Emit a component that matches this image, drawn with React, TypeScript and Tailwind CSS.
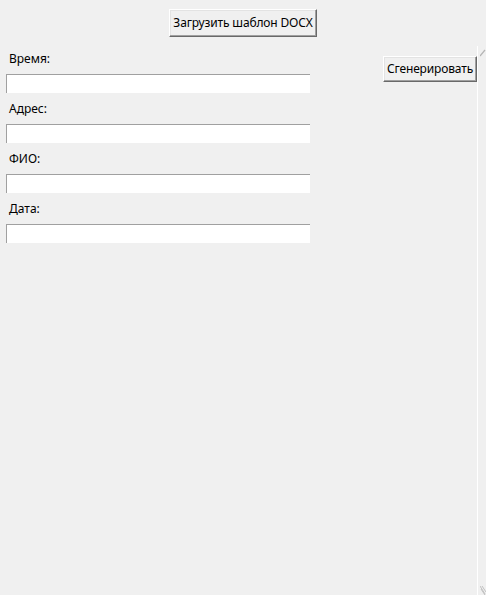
const fields = ["Время:", "Адрес:", "ФИО:", "Дата:"];

const btn =
  "h-full w-full px-0 whitespace-nowrap bg-[#f0f0f0] text-[12px] leading-none text-black border border-t-white border-l-white border-b-[#696969] border-r-[#696969] shadow-[inset_-1px_-1px_0_#a0a0a0,inset_1px_1px_0_#e3e3e3]";

export default function App() {
  return (
    <div
      className="relative w-[486px] h-[595px] bg-[#f0f0f0] overflow-hidden flex flex-col"
      style={{ fontFamily: '"Noto Sans", "Segoe UI", sans-serif' }}
    >
      <div className="h-[46px] flex justify-center pt-[9px]">
        <div className="h-[28px] w-[148px]">
          <button className={btn + " tracking-[-0.15px]"}>Загрузить шаблон DOCX</button>
        </div>
      </div>

      <div className="flex flex-1">
        <div className="w-[310px] pl-[6px] pt-[5px] flex flex-col">
          {fields.map((f) => (
            <div key={f} className="flex flex-col mb-[8px]">
              <span className="h-[16px] pl-[3px] mb-[7px] text-[12px] leading-[16px] text-black">
                {f}
              </span>
              <input className="h-[19px] w-[304px] bg-white border-t border-l border-[#a0a0a0] border-b-0 border-r-0 outline-none" />
            </div>
          ))}
        </div>

        <div className="flex-1 flex justify-end items-start pt-[9px]">
          <div className="h-[26px] w-[94px]">
            <button className={btn + " tracking-[-0.15px]"}>Сгенерировать</button>
          </div>
        </div>

        <div className="w-[9px] relative border-l border-white">
          <svg className="absolute top-[3px] right-0" width="6" height="8" viewBox="0 0 6 8">
            <path d="M0 7 L5 1" stroke="#b4b4b4" strokeWidth="1.2" />
          </svg>
          <svg className="absolute bottom-0 right-0" width="6" height="10" viewBox="0 0 6 10">
            <path d="M0 1 L5 9 M2 1 L6 7 M1 4 L5 10" stroke="#c0c0c0" strokeWidth="1" />
          </svg>
        </div>
      </div>
    </div>
  );
}
